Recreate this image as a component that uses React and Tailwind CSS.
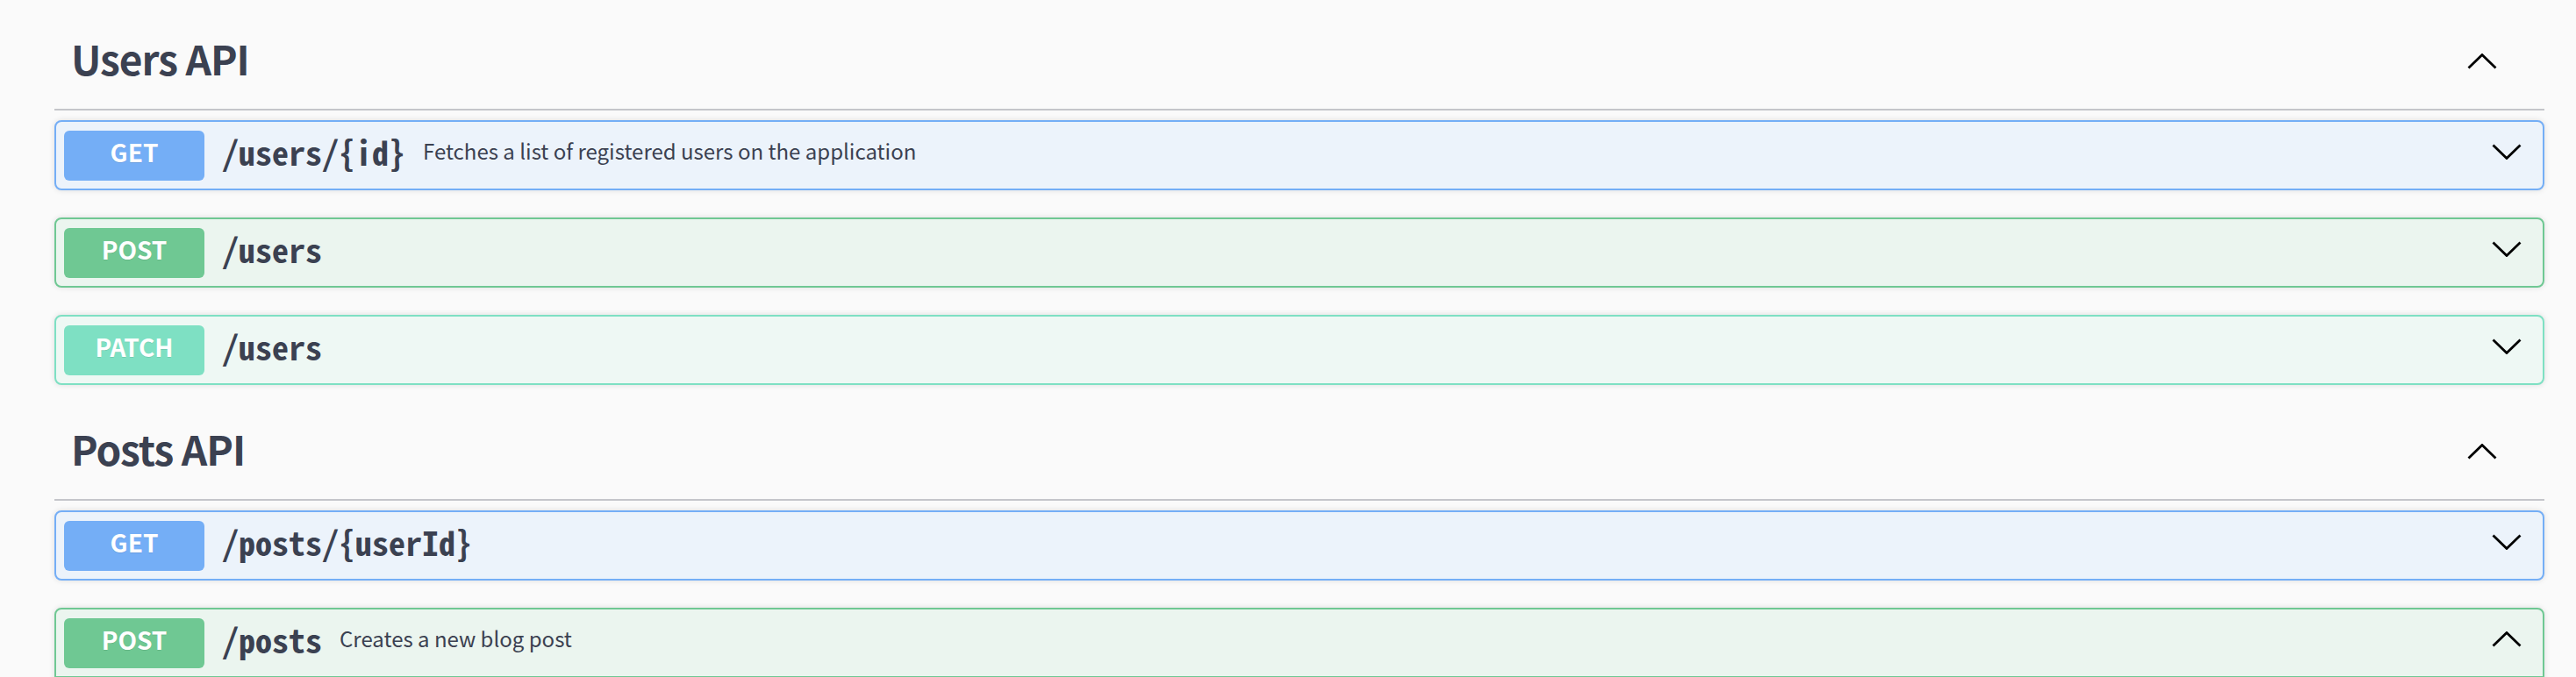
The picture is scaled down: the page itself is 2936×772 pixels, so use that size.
import React from "react";

const STYLES = {
  GET: { wrap: "border-[#74aef6] bg-[#ecf3fb]", badge: "bg-[#74aef6]" },
  POST: { wrap: "border-[#6fc893] bg-[#ebf5ef]", badge: "bg-[#6fc893]" },
  PATCH: { wrap: "border-[#7ee0c3] bg-[#eef8f4]", badge: "bg-[#7ee0c3]" },
};

function Chevron({ up }) {
  return (
    <svg width="34" height="18" viewBox="0 0 34 18" className="shrink-0 mb-[8px]">
      <polyline
        points={up ? "1.5,16.5 17,1.5 32.5,16.5" : "1.5,1.5 17,16.5 32.5,1.5"}
        fill="none"
        stroke="#000"
        strokeWidth="2.8"
      />
    </svg>
  );
}

function Op({ method, path, desc, open }) {
  const s = STYLES[method];
  return (
    <div className={`border-2 rounded-[8px] shadow-[0_0_6px_rgba(0,0,0,0.12)] ${s.wrap}`}>
      <div className="h-[76px] flex items-center pl-[9px] pr-[24px]">
        <div
          className={`w-[160px] h-[57px] shrink-0 rounded-[6px] flex items-center justify-center pb-[8px] text-white font-bold text-[28px] leading-none [text-shadow:0_1px_0_rgba(0,0,0,0.1)] ${s.badge}`}
          style={{ fontFamily: '"Noto Sans CJK KR", "Noto Sans", sans-serif' }}
        >
          {method}
        </div>
        <span
          className="px-[20px] pb-[8px] text-[38px] leading-none font-bold text-[#3b4151] whitespace-nowrap"
          style={{ fontFamily: '"Noto Sans Mono CJK KR", "DejaVu Sans Mono", monospace' }}
        >
          {path}
        </span>
        <span
          className="flex-1 text-[24px] leading-none text-[#3b4151] pb-[10px] whitespace-nowrap"
          style={{ fontFamily: '"Noto Sans CJK KR", "Noto Sans", sans-serif' }}
        >
          {desc}
        </span>
        <Chevron up={open} />
      </div>
      {open && (
        <div className="border-t-2 border-[#6fc893] h-[300px] bg-[#ebf5ef]" />
      )}
    </div>
  );
}

function Section({ title, ops }) {
  return (
    <section className="mb-[30px]">
      <div className="h-[102px] flex items-center border-b-2 border-[#c4c5ca] pl-[19px] pr-[54px]">
        <h3
          className="flex-1 text-[46px] leading-[46px] tracking-[-1px] pb-[16px] font-bold text-[#3b4151]"
          style={{ fontFamily: '"Noto Sans CJK KR", "Noto Sans", sans-serif' }}
        >
          {title}
        </h3>
        <Chevron up />
      </div>
      <div className="mt-[11px] flex flex-col gap-[31px]">
        {ops.map((o, i) => (
          <Op key={i} {...o} />
        ))}
      </div>
    </section>
  );
}

export default function App() {
  return (
    <div className="min-h-screen bg-[#fafafa] pt-[24px]">
      <div className="ml-[62px] w-[2838px]">
        <Section
          title="Users API"
          ops={[
            { method: "GET", path: "/users/{id}", desc: "Fetches a list of registered users on the application" },
            { method: "POST", path: "/users", desc: "" },
            { method: "PATCH", path: "/users", desc: "" },
          ]}
        />
        <Section
          title="Posts API"
          ops={[
            { method: "GET", path: "/posts/{userId}", desc: "" },
            { method: "POST", path: "/posts", desc: "Creates a new blog post", open: true },
          ]}
        />
      </div>
    </div>
  );
}
